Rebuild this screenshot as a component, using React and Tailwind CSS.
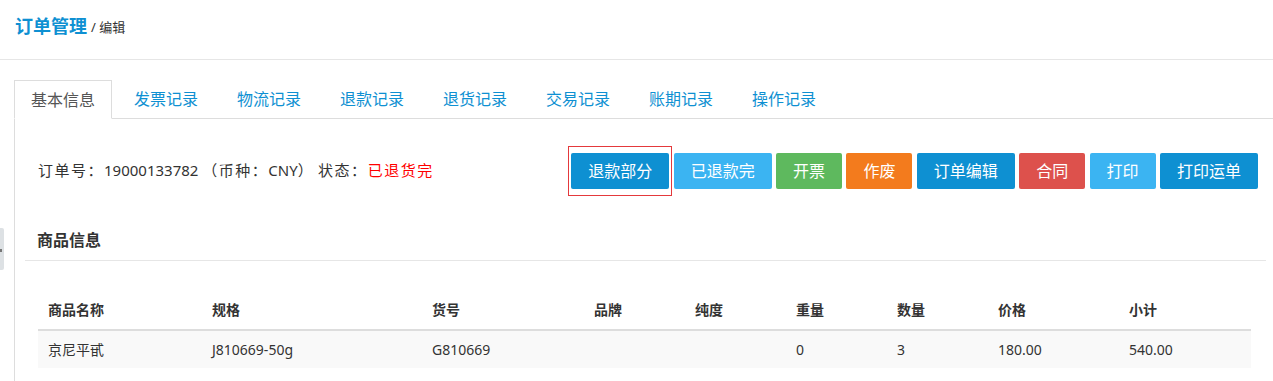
import React from "react";

const tabs = ["基本信息", "发票记录", "物流记录", "退款记录", "退货记录", "交易记录", "账期记录", "操作记录"];

const buttons = [
  { label: "已退款完", cls: "bg-[#3bb4f2] w-[98px]" },
  { label: "开票", cls: "bg-[#5eb95e] w-[66px]" },
  { label: "作废", cls: "bg-[#f37b1d] w-[66px]" },
  { label: "订单编辑", cls: "bg-[#0e90d2] w-[98px]" },
  { label: "合同", cls: "bg-[#dd514c] w-[66px]" },
  { label: "打印", cls: "bg-[#3bb4f2] w-[66px]" },
  { label: "打印运单", cls: "bg-[#0e90d2] w-[98px]" },
];

const columns = ["商品名称", "规格", "货号", "品牌", "纯度", "重量", "数量", "价格", "小计"];
const rows = [["京尼平甙", "J810669-50g", "G810669", "", "", "0", "3", "180.00", "540.00"]];

const gridCols =
  "grid grid-cols-[164px_220px_162px_101px_101px_101px_101px_131px_132px]";

const App = () => {
  return (
    <div className="relative w-[1273px] h-[381px] overflow-hidden bg-white text-[#333] font-['Noto_Sans','Noto_Sans_CJK_SC',sans-serif]">
      {/* sidebar toggle handle */}
      <div className="absolute left-0 top-[228px] w-[4px] h-[42px] bg-[#dde1e4] rounded-r-[2px]">
        <div className="absolute left-0 top-[21px] w-[2px] h-[3px] bg-[#777]"></div>
      </div>

      <div className="h-[60px] border-b border-[#e6e6e6] pl-[15px] pb-[8px] flex items-center">
        <span className="text-[18px] font-bold text-[#0e90d2] leading-none">订单管理</span>
        <span className="ml-[4px] text-[13px] leading-none mt-[3px]">/ 编辑</span>
      </div>

      <div className="pl-[14px] pt-[20px]">
        <ul className="flex h-[39px] border-b border-[#ddd]">
          {tabs.map((t, i) => (
            <li
              key={t}
              className={
                i === 0
                  ? "w-[98px] mr-[5px] h-[39px] border border-[#ddd] border-b-white bg-white flex items-center justify-center text-[16px] text-[#555]"
                  : "w-[98px] mr-[5px] h-[38px] flex items-center justify-center text-[16px] text-[#0e90d2]"
              }
            >
              {t}
            </li>
          ))}
        </ul>

        <div className="border-l border-[#ddd] h-[300px]">
          <div className="flex items-center justify-between pl-[23px] pr-[15px] pt-[27px]">
            <div className="text-[15px] mt-[-2px] whitespace-pre">
              <span className="tracking-[1.5px]">订单号：</span>19000133782 <span className="tracking-[1.5px]">（币种：</span>CNY<span className="tracking-[1.5px]">）</span> <span className="tracking-[1.5px]">状态：</span>
              <span className="text-[#ff0000] tracking-[1.5px]">已退货完</span>
            </div>
            <div className="flex items-center gap-[4.4px]">
              <div className="border border-[#e4393c] px-[2px] py-[6px] -mx-[3px]">
                <button className="w-[98px] h-[36px] rounded-[2px] bg-[#0e90d2] text-white text-[16px]">
                  退款部分
                </button>
              </div>
              {buttons.map((b) => (
                <button
                  key={b.label}
                  className={`${b.cls} h-[36px] rounded-[2px] text-white text-[16px]`}
                >
                  {b.label}
                </button>
              ))}
            </div>
          </div>

          <div className="ml-[10px] w-[1241px] mt-[32px] pl-[12px] pb-[8px] border-b border-[#e6e6e6]">
            <h3 className="text-[16px] font-bold leading-[24px]">商品信息</h3>
          </div>

          <div className="ml-[23px] w-[1213px] mt-[29px] text-[14px]">
            <div className={`${gridCols} h-[41px] border-b-2 border-[#ddd] items-center font-bold`}>
              {columns.map((c) => (
                <div key={c} className="pl-[10px]">{c}</div>
              ))}
            </div>
            {rows.map((r, idx) => (
              <div key={idx} className={`${gridCols} h-[37px] bg-[#f9f9f9] items-center`}>
                {r.map((v, j) => (
                  <div key={j} className="pl-[10px]">{v}</div>
                ))}
              </div>
            ))}
          </div>
        </div>
      </div>
    </div>
  );
};

export default App;
